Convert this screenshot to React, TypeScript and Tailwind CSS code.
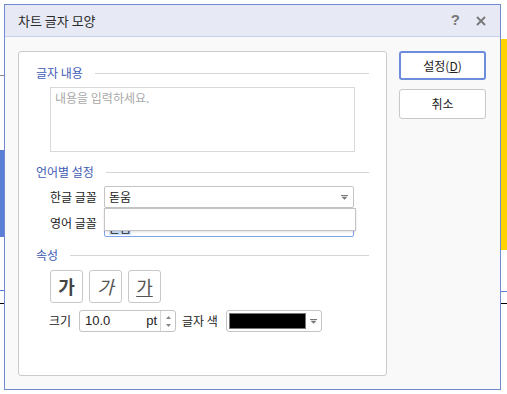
import type { ReactNode } from "react";

const font = { fontFamily: '"Noto Sans CJK KR", "Noto Sans", sans-serif' };

function Heading({ children }: { children: ReactNode }) {
  return (
    <div className="flex h-4 items-center gap-3">
      <span className="text-[12px] leading-4 text-[#3f5db5]">{children}</span>
      <div className="h-px flex-1 bg-[#d4d4d4]" />
    </div>
  );
}

function DropArrow() {
  return (
    <svg width="7" height="5" viewBox="0 0 7 5">
      <rect x="0" y="0" width="7" height="1" fill="#777" />
      <path d="M0.5 1.8 L6.5 1.8 L3.5 4.8 Z" fill="#777" />
    </svg>
  );
}

export default function App() {
  return (
    <div className="relative h-[394px] w-[507px] overflow-hidden bg-white pl-[4px] pt-[4px]" style={font}>
      {/* things behind the dialog */}
      <div className="absolute left-0 top-[75px] h-px w-[4px] bg-[#8a8a8a]" />
      <div className="absolute left-0 top-[150px] h-[87px] w-[4px] bg-[#5b7fd6]" />
      <div className="absolute left-0 top-[290px] h-px w-[4px] bg-[#5b7fd6]" />
      <div className="absolute left-0 top-[303px] h-px w-[4px] bg-black" />
      <div className="absolute right-0 top-[39px] h-[211px] w-[6px] bg-[#ffd400]" />
      <div className="absolute right-0 top-[291px] h-px w-[6px] bg-[#5b7fd6]" />
      <div className="absolute right-0 top-[303px] h-px w-[6px] bg-black" />

      {/* dialog */}
      <div className="relative flex h-[386px] w-[497px] flex-col border border-[#7089cf] bg-[#f9f9f9]">
        <div className="flex h-[32px] shrink-0 items-center justify-between border-b border-[#c9d2ec] bg-[#e7eaf5] pl-[13px] pr-[14px]">
          <span className="text-[13px] text-[#2a2a2a]">차트 글자 모양</span>
          <div className="flex items-center gap-[16px] text-[#777]">
            <span className="text-[15px] font-bold" style={{ fontFamily: '"Liberation Sans", sans-serif' }}>?</span>
            <svg width="10" height="10" viewBox="0 0 10 10">
              <path d="M1 1 L9 9 M9 1 L1 9" stroke="#777" strokeWidth="1.8" />
            </svg>
          </div>
        </div>

        <div className="flex flex-1 gap-[12px] pl-[13px] pt-[14px]">
          {/* panel */}
          <div className="flex h-[325px] w-[369px] flex-col rounded-[3px] border border-[#cbcbcb] bg-white pl-[17px] pr-[17px] pt-[13px]">
            <Heading>글자 내용</Heading>
            <div className="ml-[14px] mt-[6px] h-[65px] w-[305px] border border-[#d9d9d9] px-[4px] py-[1px] text-[12px] text-[#a8a8a8]">
              내용을 입력하세요.
            </div>

            <div className="mt-[12px]">
              <Heading>언어별 설정</Heading>
            </div>
            <div className="ml-[14px] mt-[6px] flex h-[22px] items-center text-[12px] text-[#222]">
              <span className="w-[54px]">한글 글꼴</span>
              <div className="relative flex h-[22px] w-[250px] items-center justify-between rounded-[2px] border border-[#c4c4c4] pl-[4px] pr-[5px]">
                <span>돋움</span>
                <DropArrow />
                <div className="absolute left-[-1px] top-[21px] z-10 h-[23px] w-[252px] border border-[#c4c4c4] bg-white shadow-[0_1px_2px_rgba(0,0,0,0.12)]" />
              </div>
            </div>
            <div className="ml-[14px] mt-[3px] flex h-[26px] items-start text-[12px] text-[#222]">
              <span className="mt-[3px] w-[54px]">영어 글꼴</span>
              <div className="flex h-[26px] w-[250px] items-end rounded-[2px] border border-[#7ea3e8] pb-[1px] pl-[4px]">
                <span className="bg-[#cfe0fa] leading-[14px]">돋움</span>
              </div>
            </div>

            <div className="mt-[10px]">
              <Heading>속성</Heading>
            </div>
            <div className="ml-[14px] mt-[7px] flex gap-[6px]">
              <div className="flex h-[33px] w-[33px] items-center justify-center rounded-[3px] border border-[#c8c8c8] text-[18px] font-bold text-[#444]">가</div>
              <div className="flex h-[33px] w-[33px] items-center justify-center rounded-[3px] border border-[#c8c8c8] text-[18px] italic text-[#555]">가</div>
              <div className="flex h-[33px] w-[33px] items-center justify-center rounded-[3px] border border-[#c8c8c8] text-[18px] text-[#555] underline underline-offset-2">가</div>
            </div>
            <div className="ml-[13px] mt-[7px] flex h-[22px] items-center text-[12px] text-[#222]">
              <span className="w-[30px]">크기</span>
              <div className="flex h-[22px] w-[97px] rounded-[3px] border border-[#c4c4c4]">
                <div className="flex flex-1 items-center justify-between pl-[5px] pr-[3px]">
                  <span style={{ fontFamily: '"Liberation Sans", sans-serif' }} className="text-[13px]">10.0</span>
                  <span style={{ fontFamily: '"Liberation Sans", sans-serif' }} className="text-[13px]">pt</span>
                </div>
                <div className="flex w-[15px] flex-col items-center justify-center gap-[5px] border-l border-[#d4d4d4]">
                  <svg width="5" height="3" viewBox="0 0 5 3"><path d="M0 3 L2.5 0 L5 3 Z" fill="#888" /></svg>
                  <svg width="5" height="3" viewBox="0 0 5 3"><path d="M0 0 L5 0 L2.5 3 Z" fill="#888" /></svg>
                </div>
              </div>
              <span className="ml-[6px] w-[44px]">글자 색</span>
              <div className="flex h-[22px] w-[96px] items-center rounded-[3px] border border-[#c4c4c4] pl-[2px]">
                <div className="h-[16px] w-[77px] border border-[#777] bg-black" />
                <div className="flex flex-1 items-center justify-center">
                  <DropArrow />
                </div>
              </div>
            </div>
          </div>

          {/* buttons */}
          <div className="flex flex-col gap-[9px]">
            <button className="flex h-[29px] w-[87px] items-center justify-center rounded-[3px] border-2 border-[#6d8cdc] bg-white text-[12px] text-[#222]">
              설정(<span className="underline">D</span>)
            </button>
            <button className="flex h-[30px] w-[87px] items-center justify-center rounded-[3px] border border-[#c8c8c8] bg-white text-[12px] text-[#222]">
              취소
            </button>
          </div>
        </div>
      </div>
    </div>
  );
}
